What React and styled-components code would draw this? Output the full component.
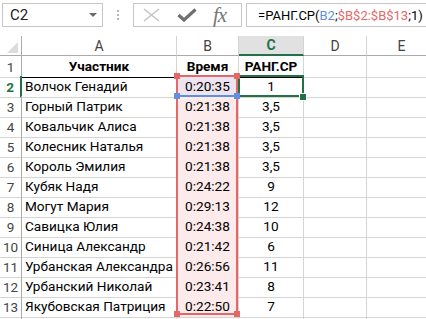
import React from "react";
import styled, { createGlobalStyle } from "styled-components";

const GlobalStyle = createGlobalStyle`
  html, body {
    margin: 0;
    padding: 0;
    background: #ffffff;
  }
  body {
    font-family: Roboto, "Liberation Sans", sans-serif;
  }
`;

const COLS = "22px 155px 62px 65px 63px 70px";

const GREEN = "#217346";
const RED = "#e36868";
const BLUE = "#5e8fe0";

const Page = styled.div`
  position: relative;
  width: 426px;
  height: 319px;
  overflow: hidden;
  background: #ffffff;
`;

const FormulaBar = styled.div`
  display: flex;
  align-items: stretch;
  height: 24px;
  padding: 3px 0 0 2px;
  margin-bottom: 9px;

  & > * {
    flex-shrink: 0;
  }
`;

const NameBox = styled.div`
  box-sizing: border-box;
  width: 101px;
  display: flex;
  align-items: center;
  justify-content: space-between;
  padding: 0 5px 0 7px;
  border: 1px solid #c6c6c6;
  font-size: 15px;
  color: #222;
`;

const Caret = styled.span`
  width: 0;
  height: 0;
  border-left: 4px solid transparent;
  border-right: 4px solid transparent;
  border-top: 4px solid #6a6a6a;
`;

const Dots = styled.div`
  width: 30px;
  display: flex;
  flex-direction: column;
  align-items: center;
  justify-content: center;
  gap: 2px;

  span {
    width: 2px;
    height: 2px;
    background: #b4b4b4;
  }
`;

const ButtonsBox = styled.div`
  box-sizing: border-box;
  width: 109px;
  display: flex;
  align-items: center;
  padding-left: 9px;
  gap: 17px;
  border: 1px solid #c6c6c6;
`;

const Fx = styled.span`
  margin-left: -1px;
  font-family: "Liberation Serif", "DejaVu Serif", serif;
  font-style: italic;
  font-size: 21px;
  color: #767676;
  letter-spacing: -1px;
`;

const FormulaInput = styled.div`
  box-sizing: border-box;
  width: 200px;
  margin-left: 4px;
  display: flex;
  align-items: center;
  padding-left: 11px;
  border: 1px solid #c6c6c6;
  font-size: 13px;
  color: #000;
  white-space: nowrap;
`;

const Ref = styled.span`
  color: ${(p) => p.color};
`;

const Sheet = styled.div`
  position: relative;
`;

const GridRow = styled.div`
  display: grid;
  grid-template-columns: ${COLS};
  height: 20px;
`;

const Corner = styled.div`
  position: relative;
  box-sizing: border-box;
  border-right: 1px solid #ababab;
  border-bottom: 1px solid #ababab;

  &::after {
    content: "";
    position: absolute;
    right: 3px;
    bottom: 2px;
    width: 0;
    height: 0;
    border-left: 11px solid transparent;
    border-bottom: 11px solid #dcdcdc;
  }
`;

const ColHead = styled.div`
  box-sizing: border-box;
  display: flex;
  align-items: center;
  justify-content: center;
  font-size: 14px;
  border-right: 1px solid #d4d4d4;
  border-bottom: ${(p) => (p.$active ? `2px solid ${GREEN}` : "1px solid #ababab")};
  background: ${(p) => (p.$active ? "#e1e1e1" : "#ffffff")};
  color: ${(p) => (p.$active ? GREEN : "#444")};
  font-weight: ${(p) => (p.$active ? 700 : 400)};
`;

const RowHead = styled.div`
  box-sizing: border-box;
  text-align: center;
  font-size: 13.5px;
  line-height: 20px;
  padding-top: 1px;
  border-bottom: 1px solid #d4d4d4;
  border-right: ${(p) => (p.$active ? `2px solid ${GREEN}` : "1px solid #ababab")};
  color: ${(p) => (p.$active ? GREEN : "#444")};
  font-weight: ${(p) => (p.$active ? 700 : 400)};
`;

const Cell = styled.div`
  box-sizing: border-box;
  overflow: hidden;
  white-space: nowrap;
  padding: 1px 3px 0;
  font-size: 13.6px;
  line-height: 19px;
  color: #000;
  text-align: ${(p) => p.$align || "left"};
  font-weight: ${(p) => (p.$bold ? 700 : 400)};
  background: ${(p) => p.$fill || "transparent"};
  border-right: 1px solid #d4d4d4;
  border-bottom: 1px solid ${(p) => (p.$under ? "#000" : "#d4d4d4")};
`;

const RangeBox = styled.div`
  position: absolute;
  left: 176px;
  top: 39px;
  width: 62px;
  height: 240px;
  box-sizing: border-box;
  border: 2px solid ${RED};
  pointer-events: none;
`;

const RefLine = styled.div`
  position: absolute;
  left: 176px;
  top: 59px;
  width: 62px;
  height: 2px;
  background: ${BLUE};
`;

const ActiveBox = styled.div`
  position: absolute;
  left: 238px;
  top: 39px;
  width: 66px;
  height: 22px;
  box-sizing: border-box;
  border: 2px solid ${GREEN};
`;

const Handle = styled.div`
  position: absolute;
  left: ${(p) => p.$x - 3}px;
  top: ${(p) => p.$y - 3}px;
  width: 6px;
  height: 6px;
  background: ${(p) => p.$color};
  box-shadow: ${(p) => (p.$ring ? "0 0 0 1px #fff" : "none")};
`;

const rows = [
  ["Волчок Генадий", "0:20:35", "1"],
  ["Горный Патрик", "0:21:38", "3,5"],
  ["Ковальчик Алиса", "0:21:38", "3,5"],
  ["Колесник Наталья", "0:21:38", "3,5"],
  ["Король Эмилия", "0:21:38", "3,5"],
  ["Кубяк Надя", "0:24:22", "9"],
  ["Могут Мария", "0:29:13", "12"],
  ["Савицка Юлия", "0:24:38", "10"],
  ["Синица Александр", "0:21:42", "6"],
  ["Урбанская Александра", "0:26:56", "11"],
  ["Урбанский Николай", "0:23:41", "8"],
  ["Якубовская Патриция", "0:22:50", "7"],
];

const XIcon = () => (
  <svg width="17" height="14" viewBox="0 0 17 14">
    <path d="M1 1 L16 13 M16 1 L1 13" stroke="#c4c4c4" strokeWidth="1.6" fill="none" />
  </svg>
);

const CheckIcon = () => (
  <svg width="20" height="14" viewBox="0 0 20 14">
    <path d="M1.5 7 L7 12 L18.5 1.5" stroke="#707070" strokeWidth="3.2" fill="none" />
  </svg>
);

export default function App() {
  return (
    <Page>
      <GlobalStyle />
      <FormulaBar>
        <NameBox>
          C2
          <Caret />
        </NameBox>
        <Dots>
          <span />
          <span />
          <span />
        </Dots>
        <ButtonsBox>
          <XIcon />
          <CheckIcon />
          <Fx>fx</Fx>
        </ButtonsBox>
        <FormulaInput>
          =РАНГ.СР(<Ref color={BLUE}>B2</Ref>;<Ref color={RED}>$B$2:$B$13</Ref>;1)
        </FormulaInput>
      </FormulaBar>

      <Sheet>
        <GridRow>
          <Corner />
          <ColHead>A</ColHead>
          <ColHead>B</ColHead>
          <ColHead $active>C</ColHead>
          <ColHead>D</ColHead>
          <ColHead>E</ColHead>
        </GridRow>

        <GridRow>
          <RowHead>1</RowHead>
          <Cell $bold $align="center" $under>Участник</Cell>
          <Cell $bold $align="center" $under>Время</Cell>
          <Cell $bold $align="center" $under>РАНГ.СР</Cell>
          <Cell />
          <Cell />
        </GridRow>

        {rows.map(([name, time, rank], i) => (
          <GridRow key={name}>
            <RowHead $active={i === 0}>{i + 2}</RowHead>
            <Cell>{name}</Cell>
            <Cell $align="center" $fill={i === 0 ? "#eee4ef" : "#fdeaea"}>
              {time}
            </Cell>
            <Cell $align="center">{rank}</Cell>
            <Cell />
            <Cell />
          </GridRow>
        ))}

        <GridRow>
          <RowHead />
          <Cell />
          <Cell />
          <Cell />
          <Cell />
          <Cell />
        </GridRow>

        <RangeBox />
        <RefLine />
        <ActiveBox />
        <Handle $x={177} $y={40} $color={RED} />
        <Handle $x={237} $y={40} $color={RED} />
        <Handle $x={177} $y={60} $color={BLUE} />
        <Handle $x={237} $y={60} $color={BLUE} />
        <Handle $x={177} $y={278} $color={RED} />
        <Handle $x={237} $y={278} $color={RED} />
        <Handle $x={303} $y={61} $color={GREEN} $ring />
      </Sheet>
    </Page>
  );
}
